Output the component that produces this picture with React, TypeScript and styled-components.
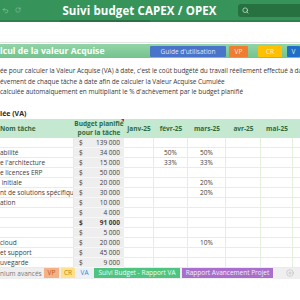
import React from 'react';
import styled, { createGlobalStyle } from 'styled-components';
import { Search, Redo2, RotateCw, PlusCircle } from 'lucide-react';

const GlobalStyle = createGlobalStyle`
  html, body {
    margin: 0;
    padding: 0;
    background: #ffffff;
  }
  body {
    font-family: 'Open Sans', 'Liberation Sans', sans-serif;
  }
`;

const Frame = styled.div`
  width: 300px;
  height: 300px;
  overflow: hidden;
  display: flex;
  flex-direction: column;
  background: #ffffff;
`;

const TitleBar = styled.div`
  height: 20px;
  flex: none;
  background: #36945b;
  display: flex;
  align-items: center;
  padding-left: 2px;
  gap: 6px;
  color: rgba(255, 255, 255, 0.45);
`;

const Title = styled.div`
  flex: 1;
  text-align: center;
  padding-left: 20px;
  color: #ffffff;
  font-weight: 700;
  font-size: 11.5px;
  letter-spacing: 0.1px;
  white-space: nowrap;
`;

const SearchBox = styled.div`
  width: 58px;
  height: 13px;
  flex: none;
  background: #27703f;
  border-radius: 3px 0 0 3px;
  display: flex;
  align-items: center;
  padding-left: 4px;
  color: #cfe9d7;
`;

const Rule = styled.div`
  height: 2px;
  flex: none;
  background: linear-gradient(90deg, #2f7f4d 0 20%, #2c6f45 20% 50%, #2f7f4d 50%);
`;

const Blank = styled.div`
  height: 20px;
  flex: none;
  border-bottom: 1px solid #e2e2e2;
`;

const Banner = styled.div`
  height: 14px;
  flex: none;
  margin-top: 1px;
  background: linear-gradient(180deg, #93d4a7, #74c38d);
  display: flex;
  align-items: center;
  white-space: nowrap;
  overflow: hidden;
`;

const BannerTitle = styled.div`
  width: 150px;
  flex: none;
  color: #ffffff;
  font-weight: 700;
  font-size: 8.6px;
  letter-spacing: 0.05px;
`;

const NavButton = styled.div<{ $bg: string; $w: number; $gap: number }>`
  width: ${(p) => p.$w}px;
  margin-right: ${(p) => p.$gap}px;
  flex: none;
  height: 11px;
  background: ${(p) => p.$bg};
  color: rgba(255, 255, 255, 0.85);
  font-size: 6.5px;
  line-height: 11px;
  text-align: center;
  border-radius: 1px;
`;

const Description = styled.div`
  flex: none;
  padding-top: 8px;
  font-size: 6.5px;
  line-height: 10.5px;
  letter-spacing: -0.05px;
  color: #3a3a3a;
  white-space: nowrap;
`;

const SectionLabel = styled.div`
  flex: none;
  margin-top: 11px;
  height: 10px;
  font-size: 7px;
  line-height: 10px;
  font-weight: 700;
  color: #2b2b2b;
  white-space: nowrap;
`;

const columns = '74px 50px 30px 34px 38px 35px 32px 20px';

const HeaderRow = styled.div`
  flex: none;
  display: grid;
  grid-template-columns: ${columns};
  height: 19px;
  background: #c5e8d1;
  color: #2e6b43;
  font-weight: 700;
  font-size: 6.5px;
`;

const HeaderCell = styled.div<{ $left?: boolean }>`
  position: relative;
  display: flex;
  align-items: center;
  justify-content: ${(p) => (p.$left ? 'flex-start' : 'center')};
  text-align: center;
  line-height: 9px;
  white-space: nowrap;
`;

const CommentMark = styled.span`
  position: absolute;
  top: 0;
  right: 0;
  width: 0;
  height: 0;
  border-top: 3px solid #e02020;
  border-left: 3px solid transparent;
`;

const Row = styled.div`
  flex: none;
  display: grid;
  grid-template-columns: ${columns};
  height: 10px;
  font-size: 6.5px;
  color: #3c3c3c;
`;

const Cell = styled.div<{ $center?: boolean }>`
  border-right: 1px solid #e3f0dc;
  border-bottom: 1px solid #e3f0dc;
  line-height: 9px;
  white-space: nowrap;
  overflow: hidden;
  text-align: ${(p) => (p.$center ? 'center' : 'left')};
`;

const BudgetCell = styled.div<{ $bold?: boolean }>`
  background: #eeeeee;
  border-bottom: 1px solid #f7f7f7;
  display: flex;
  justify-content: space-between;
  padding: 0 4px 0 5px;
  line-height: 9px;
  font-weight: ${(p) => (p.$bold ? 700 : 400)};
`;

const TabBar = styled.div`
  flex: none;
  height: 11px;
  background: #efefef;
  display: flex;
  align-items: center;
  font-size: 6.5px;
  white-space: nowrap;
  color: #7a7a7a;
`;

const Tab = styled.div<{ $bg: string; $fg: string; $w: number }>`
  width: ${(p) => p.$w}px;
  flex: none;
  margin-right: 2px;
  height: 10px;
  line-height: 10px;
  text-align: center;
  background: ${(p) => p.$bg};
  color: ${(p) => p.$fg};
`;

const TabLead = styled.div`
  width: 44px;
  flex: none;
`;

const AddTab = styled.div`
  flex: 1;
  display: flex;
  justify-content: flex-end;
  padding-right: 6px;
  color: #b0b0b0;
`;

type Line = {
  name: string;
  budget: string;
  bold?: boolean;
  feb?: string;
  mar?: string;
};

const lines: Line[] = [
  { name: '', budget: '139 000' },
  { name: 'abilité', budget: '34 000', feb: '50%', mar: '50%' },
  { name: "e l'architecture", budget: '15 000', feb: '33%', mar: '33%' },
  { name: 'e licences ERP', budget: '50 000' },
  { name: '\u00a0initiale', budget: '20 000', mar: '20%' },
  { name: 'nt de solutions spécifiqu', budget: '30 000', mar: '20%' },
  { name: 'ation', budget: '10 000' },
  { name: '', budget: '4 000' },
  { name: '', budget: '91 000', bold: true },
  { name: '', budget: '5 000' },
  { name: 'cloud', budget: '20 000', mar: '10%' },
  { name: 'et support', budget: '45 000' },
  { name: 'uvegarde', budget: '9 000' },
];

const months = ['janv-25', 'févr-25', 'mars-25', 'avr-25', 'mai-25'];

export default function App() {
  return (
    <Frame>
      <GlobalStyle />
      <TitleBar>
        <Redo2 size={7} strokeWidth={2} style={{ transform: 'scaleX(-1)' }} />
        <RotateCw size={6} strokeWidth={2} />
        <Title>Suivi budget CAPEX / OPEX</Title>
        <SearchBox>
          <Search size={7} strokeWidth={2.5} />
        </SearchBox>
      </TitleBar>
      <Rule />
      <Blank />
      <Banner>
        <BannerTitle>lcul de la valeur Acquise</BannerTitle>
        <NavButton $bg="#4a74c9" $w={76} $gap={3}>Guide d'utilisation</NavButton>
        <NavButton $bg="#ee7d33" $w={19} $gap={10}>VP</NavButton>
        <NavButton $bg="#ffc000" $w={24} $gap={5}>CR</NavButton>
        <NavButton $bg="#1f6fc6" $w={13} $gap={0}>V</NavButton>
      </Banner>
      <Description>
        <div>ée pour calculer la Valeur Acquise (VA) à date, c'est le coût budgété du travail réellement effectué à date</div>
        <div>évement de chaque tâche à date afin de calculer la Valeur Acquise Cumulée</div>
        <div>calculée automaiquement en multipliant le % d'achèvement par le budget planifié</div>
      </Description>
      <SectionLabel>lée (VA)</SectionLabel>
      <HeaderRow>
        <HeaderCell $left>Nom tâche</HeaderCell>
        <HeaderCell>
          Budget planifié
          <br />
          pour la tâche
          <CommentMark />
        </HeaderCell>
        {months.map((m) => (
          <HeaderCell key={m}>{m}</HeaderCell>
        ))}
        <HeaderCell />
      </HeaderRow>
      {lines.map((l, i) => (
        <Row key={i}>
          <Cell>{l.name}</Cell>
          <BudgetCell $bold={l.bold}>
            <span>$</span>
            <span>{l.budget}</span>
          </BudgetCell>
          <Cell $center />
          <Cell $center>{l.feb}</Cell>
          <Cell $center>{l.mar}</Cell>
          <Cell $center />
          <Cell $center />
          <Cell $center />
        </Row>
      ))}
      <TabBar>
        <TabLead>nium avancés</TabLead>
        <Tab $bg="#f4b183" $fg="#c0561a" $w={15}>VP</Tab>
        <Tab $bg="#ffe08c" $fg="#b8860b" $w={14}>CR</Tab>
        <Tab $bg="#eaf2f8" $fg="#4a7ccc" $w={15}>VA</Tab>
        <Tab $bg="#4fc481" $fg="#e9fff1" $w={86}>Suivi Budget - Rapport VA</Tab>
        <Tab $bg="#a870cc" $fg="#f5ecfb" $w={91}>Rapport Avancement Projet</Tab>
        <AddTab>
          <PlusCircle size={8} strokeWidth={1.5} />
        </AddTab>
      </TabBar>
    </Frame>
  );
}
